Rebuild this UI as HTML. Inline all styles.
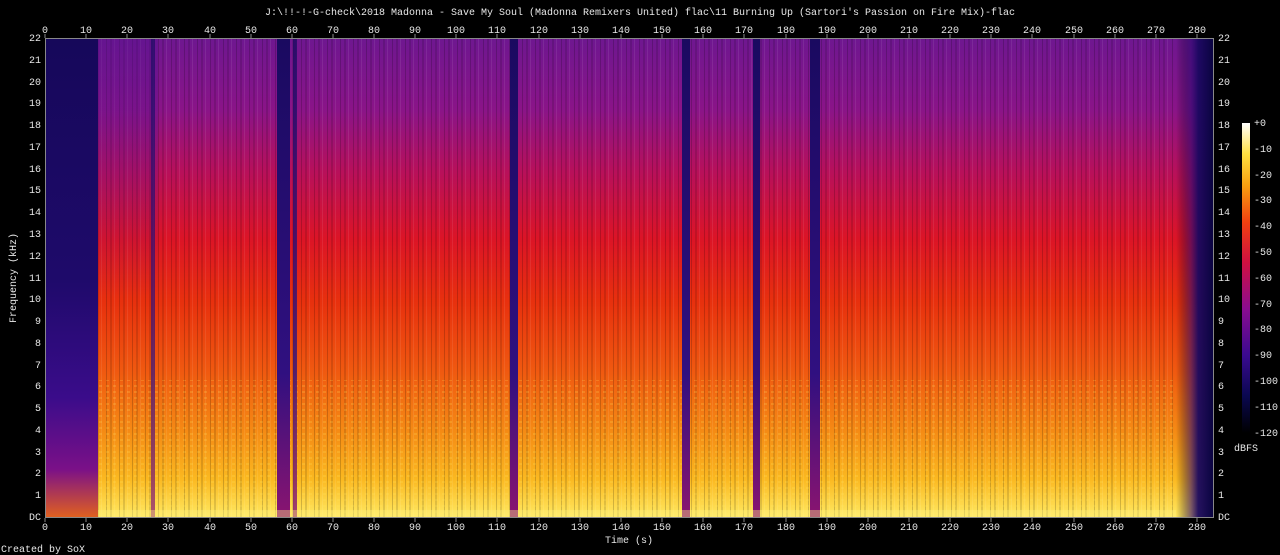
<!DOCTYPE html>
<html><head><meta charset="utf-8"><style>
html,body{margin:0;padding:0;background:#000;width:1280px;height:555px;overflow:hidden}
svg text{font-family:"Liberation Mono",monospace;font-size:10px;fill:#e8e8e8}
</style></head><body>
<svg width="1280" height="555" viewBox="0 0 1280 555" xmlns="http://www.w3.org/2000/svg">
<defs>
<linearGradient id="main" x1="0" y1="0" x2="0" y2="1">
<stop offset="0" stop-color="#6e1790"/>
<stop offset="0.15" stop-color="#8a1488"/>
<stop offset="0.28" stop-color="#b8105a"/>
<stop offset="0.42" stop-color="#dc1426"/>
<stop offset="0.55" stop-color="#e8300e"/>
<stop offset="0.7" stop-color="#f05a10"/>
<stop offset="0.82" stop-color="#f58a14"/>
<stop offset="0.92" stop-color="#fbb820"/>
<stop offset="1" stop-color="#ffe860"/>
</linearGradient>
<linearGradient id="intro" x1="0" y1="0" x2="0" y2="1">
<stop offset="0" stop-color="#16085a"/>
<stop offset="0.5" stop-color="#1e0a6a"/>
<stop offset="0.75" stop-color="#3a0c8a"/>
<stop offset="0.9" stop-color="#7a1088"/>
<stop offset="1" stop-color="#e06020"/>
</linearGradient>
<linearGradient id="dark" x1="0" y1="0" x2="0" y2="1">
<stop offset="0" stop-color="#1a0a60"/>
<stop offset="0.7" stop-color="#301080"/>
<stop offset="1" stop-color="#8a1470"/>
</linearGradient>
<linearGradient id="purp" x1="0" y1="0" x2="0" y2="1">
<stop offset="0" stop-color="#5a1090" stop-opacity="0.45"/>
<stop offset="1" stop-color="#5a1090" stop-opacity="0"/>
</linearGradient>
<linearGradient id="fade" x1="0" y1="0" x2="1" y2="0">
<stop offset="0" stop-color="#000" stop-opacity="0"/>
<stop offset="0.4" stop-color="#2a0870" stop-opacity="0.6"/>
<stop offset="0.6" stop-color="#1a0860" stop-opacity="0.95"/>
<stop offset="1" stop-color="#0a0440" stop-opacity="1"/>
</linearGradient>
<linearGradient id="cbar" x1="0" y1="1" x2="0" y2="0">
<stop offset="0" stop-color="#000"/>
<stop offset="0.12" stop-color="#0a0850"/>
<stop offset="0.25" stop-color="#3a0a90"/>
<stop offset="0.4" stop-color="#8a0c90"/>
<stop offset="0.55" stop-color="#d01040"/>
<stop offset="0.68" stop-color="#f04010"/>
<stop offset="0.8" stop-color="#f8a010"/>
<stop offset="0.9" stop-color="#ffe040"/>
<stop offset="1" stop-color="#fff"/>
</linearGradient>
<pattern id="stripes" width="13" height="10" patternUnits="userSpaceOnUse">
<rect x="2" width="1" height="10" fill="#000" opacity="0.18"/>
<rect x="6" width="2" height="10" fill="#000" opacity="0.12"/>
<rect x="10" width="1" height="10" fill="#fff" opacity="0.08"/>
</pattern>
<pattern id="low" width="7" height="6" patternUnits="userSpaceOnUse">
<rect x="1" y="1" width="3" height="2" fill="#ffe860" opacity="0.2"/>
</pattern>
</defs>
<text x="640" y="15" text-anchor="middle">J:\!!-!-G-check\2018 Madonna - Save My Soul (Madonna Remixers United) flac\11 Burning Up (Sartori's Passion on Fire Mix)-flac</text>
<rect x="45" y="38" width="1168" height="479" fill="url(#main)"/>
<rect x="98" y="38" width="1078" height="479" fill="url(#stripes)"/>
<rect x="98" y="380" width="1078" height="137" fill="url(#low)"/>
<rect x="45" y="38" width="53" height="479" fill="url(#intro)"/>
<rect x="98" y="38" width="60" height="260" fill="url(#purp)"/>
<rect x="277" y="38" width="13" height="479" fill="url(#dark)"/>
<rect x="293" y="38" width="4" height="479" fill="url(#dark)" opacity="0.8"/>
<rect x="151" y="38" width="4" height="479" fill="url(#dark)" opacity="0.7"/>
<rect x="510" y="38" width="8" height="479" fill="url(#dark)"/>
<rect x="682" y="38" width="8" height="479" fill="url(#dark)"/>
<rect x="753" y="38" width="7" height="479" fill="url(#dark)"/>
<rect x="810" y="38" width="10" height="479" fill="url(#dark)"/>
<rect x="1176" y="38" width="37" height="479" fill="url(#fade)"/>
<rect x="98" y="510" width="1078" height="7" fill="#fff080" opacity="0.4"/>
<rect x="45.5" y="38.5" width="1168" height="479" fill="none" stroke="#888"/>
<g stroke="#888">
<path d="M45 38v-4M86 38v-4M127 38v-4M168 38v-4M210 38v-4M251 38v-4M292 38v-4M333 38v-4M374 38v-4M415 38v-4M456 38v-4M497 38v-4M539 38v-4M580 38v-4M621 38v-4M662 38v-4M703 38v-4M744 38v-4M786 38v-4M827 38v-4M868 38v-4M909 38v-4M950 38v-4M991 38v-4M1032 38v-4M1074 38v-4M1115 38v-4M1156 38v-4M1197 38v-4"/>
<path d="M45 518v4M86 518v4M127 518v4M168 518v4M210 518v4M251 518v4M292 518v4M333 518v4M374 518v4M415 518v4M456 518v4M497 518v4M539 518v4M580 518v4M621 518v4M662 518v4M703 518v4M744 518v4M786 518v4M827 518v4M868 518v4M909 518v4M950 518v4M991 518v4M1032 518v4M1074 518v4M1115 518v4M1156 518v4M1197 518v4"/>
</g>
<g text-anchor="middle">
<text x="45" y="33">0</text><text x="86" y="33">10</text><text x="127" y="33">20</text><text x="168" y="33">30</text><text x="210" y="33">40</text><text x="251" y="33">50</text><text x="292" y="33">60</text><text x="333" y="33">70</text><text x="374" y="33">80</text><text x="415" y="33">90</text><text x="456" y="33">100</text><text x="497" y="33">110</text><text x="539" y="33">120</text><text x="580" y="33">130</text><text x="621" y="33">140</text><text x="662" y="33">150</text><text x="703" y="33">160</text><text x="744" y="33">170</text><text x="786" y="33">180</text><text x="827" y="33">190</text><text x="868" y="33">200</text><text x="909" y="33">210</text><text x="950" y="33">220</text><text x="991" y="33">230</text><text x="1032" y="33">240</text><text x="1074" y="33">250</text><text x="1115" y="33">260</text><text x="1156" y="33">270</text><text x="1197" y="33">280</text>
<text x="45" y="530">0</text><text x="86" y="530">10</text><text x="127" y="530">20</text><text x="168" y="530">30</text><text x="210" y="530">40</text><text x="251" y="530">50</text><text x="292" y="530">60</text><text x="333" y="530">70</text><text x="374" y="530">80</text><text x="415" y="530">90</text><text x="456" y="530">100</text><text x="497" y="530">110</text><text x="539" y="530">120</text><text x="580" y="530">130</text><text x="621" y="530">140</text><text x="662" y="530">150</text><text x="703" y="530">160</text><text x="744" y="530">170</text><text x="786" y="530">180</text><text x="827" y="530">190</text><text x="868" y="530">200</text><text x="909" y="530">210</text><text x="950" y="530">220</text><text x="991" y="530">230</text><text x="1032" y="530">240</text><text x="1074" y="530">250</text><text x="1115" y="530">260</text><text x="1156" y="530">270</text><text x="1197" y="530">280</text>
<text x="629" y="543">Time (s)</text>
</g>
<g text-anchor="end">
<text x="41" y="520">DC</text><text x="41" y="498">1</text><text x="41" y="476">2</text><text x="41" y="455">3</text><text x="41" y="433">4</text><text x="41" y="411">5</text><text x="41" y="389">6</text><text x="41" y="368">7</text><text x="41" y="346">8</text><text x="41" y="324">9</text><text x="41" y="302">10</text><text x="41" y="281">11</text><text x="41" y="259">12</text><text x="41" y="237">13</text><text x="41" y="215">14</text><text x="41" y="193">15</text><text x="41" y="172">16</text><text x="41" y="150">17</text><text x="41" y="128">18</text><text x="41" y="106">19</text><text x="41" y="85">20</text><text x="41" y="63">21</text><text x="41" y="41">22</text>
</g>
<g>
<text x="1218" y="520">DC</text><text x="1218" y="498">1</text><text x="1218" y="476">2</text><text x="1218" y="455">3</text><text x="1218" y="433">4</text><text x="1218" y="411">5</text><text x="1218" y="389">6</text><text x="1218" y="368">7</text><text x="1218" y="346">8</text><text x="1218" y="324">9</text><text x="1218" y="302">10</text><text x="1218" y="281">11</text><text x="1218" y="259">12</text><text x="1218" y="237">13</text><text x="1218" y="215">14</text><text x="1218" y="193">15</text><text x="1218" y="172">16</text><text x="1218" y="150">17</text><text x="1218" y="128">18</text><text x="1218" y="106">19</text><text x="1218" y="85">20</text><text x="1218" y="63">21</text><text x="1218" y="41">22</text>
</g>
<text x="16" y="278" text-anchor="middle" transform="rotate(-90 16 278)">Frequency (kHz)</text>
<rect x="1242" y="123" width="8" height="310" fill="url(#cbar)"/>
<g>
<text x="1254" y="126">+0</text><text x="1254" y="152">-10</text><text x="1254" y="178">-20</text><text x="1254" y="203">-30</text><text x="1254" y="229">-40</text><text x="1254" y="255">-50</text><text x="1254" y="281">-60</text><text x="1254" y="307">-70</text><text x="1254" y="332">-80</text><text x="1254" y="358">-90</text><text x="1254" y="384">-100</text><text x="1254" y="410">-110</text><text x="1254" y="436">-120</text>
</g>
<text x="1246" y="451" text-anchor="middle">dBFS</text>
<text x="1" y="552">Created by SoX</text>
</svg>
</body></html>
